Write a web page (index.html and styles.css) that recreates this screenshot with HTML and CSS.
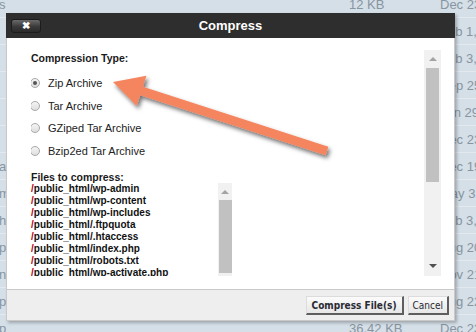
FILE: index.html
```html
<!DOCTYPE html>
<html>
<head>
<title>File Manager - Compress</title>
<link rel="stylesheet" href="styles.css">
</head>
<body>
  <div id="listing">
    <div class="row"><span class="name">s</span><span class="size">12 KB</span><span class="date">Dec 23, 2018</span></div>
    <div class="row"><span class="name"></span><span class="size">4 KB</span><span class="date">Feb 1, 2019</span></div>
    <div class="row"><span class="name"></span><span class="size">4 KB</span><span class="date">Feb 3, 2019</span></div>
    <div class="row"><span class="name"></span><span class="size">4 KB</span><span class="date">Sep 25, 2018</span></div>
    <div class="row"><span class="name"></span><span class="size">20 bytes</span><span class="date">Jan 29, 2019</span></div>
    <div class="row"><span class="name"></span><span class="size">1.2 KB</span><span class="date">Dec 23, 2018</span></div>
    <div class="row"><span class="name">a</span><span class="size">418 bytes</span><span class="date">Dec 19, 2018</span></div>
    <div class="row"><span class="name">m</span><span class="size">19.46 KB</span><span class="date">May 3, 2018</span></div>
    <div class="row"><span class="name">h</span><span class="size">7.26 KB</span><span class="date">Feb 3, 2019</span></div>
    <div class="row"><span class="name">p</span><span class="size">6.77 KB</span><span class="date">Aug 20, 2018</span></div>
    <div class="row"><span class="name">n</span><span class="size">369 bytes</span><span class="date">Nov 21, 2018</span></div>
    <div class="row"><span class="name">p</span><span class="size">2.27 KB</span><span class="date">Aug 22, 2018</span></div>
    <div class="row"><span class="name">p</span><span class="size">36.42 KB</span><span class="date">Dec 23, 2018</span></div>
  </div>

  <div id="dialog">
    <div class="dlg-head">
      <span class="close-btn">&#10006;</span>
      <span class="dlg-title">Compress</span>
    </div>
    <div class="dlg-body">
      <div class="scroll-content">
        <div class="section-label">Compression Type:</div>
        <div class="opt"><span class="radio checked"></span>Zip Archive</div>
        <div class="opt"><span class="radio"></span>Tar Archive</div>
        <div class="opt"><span class="radio"></span>GZiped Tar Archive</div>
        <div class="opt"><span class="radio"></span>Bzip2ed Tar Archive</div>
        <div class="files-label">Files to compress:</div>
        <div class="files-box">
          <div class="files-text">
            <div><span class="slash">/</span>public_html/wp-admin</div>
            <div><span class="slash">/</span>public_html/wp-content</div>
            <div><span class="slash">/</span>public_html/wp-includes</div>
            <div><span class="slash">/</span>public_html/.ftpquota</div>
            <div><span class="slash">/</span>public_html/.htaccess</div>
            <div><span class="slash">/</span>public_html/index.php</div>
            <div><span class="slash">/</span>public_html/robots.txt</div>
            <div><span class="slash">/</span>public_html/wp-activate.php</div>
            <div><span class="slash">/</span>public_html/wp-blog-header.php</div>
            <div><span class="slash">/</span>public_html/wp-config.php</div>
          </div>
          <div class="lscroll">
            <span class="arr-up"></span>
            <span class="lthumb"></span>
          </div>
        </div>
      </div>
      <div class="vscroll">
        <span class="arr-up"></span>
        <span class="thumb"></span>
        <span class="arr-down"></span>
      </div>
    </div>
    <div class="dlg-foot">
      <button class="btn btn-main">Compress File(s)</button>
      <button class="btn">Cancel</button>
    </div>
  </div>

  <svg id="arrow" width="476" height="332" viewBox="0 0 476 332">
    <defs>
      <filter id="shadow" x="-10%" y="-30%" width="130%" height="180%">
        <feDropShadow dx="2" dy="3" stdDeviation="2" flood-color="#000" flood-opacity="0.55"/>
      </filter>
    </defs>
    <polygon filter="url(#shadow)" fill="#f4855f"
      points="113,82 146.4,75.7 143,86.7 328.4,146.7 325.6,155.3 140.2,95.3 136.8,106"/>
  </svg>
</body>
</html>
```

FILE: styles.css
```css
body {
margin: 0;
width: 476px;
height: 332px;
overflow: hidden;
background-color: #d5dfe7;
font-family: "Liberation Sans", Arial, sans-serif;
}

#listing {
margin-top: -9px;
overflow: hidden;
}

.row {
display: grid;
grid-template-columns: 349px 91px 1fr;
height: 26px;
border-bottom: 1px solid #e3e9ee;
align-items: center;
font-size: 13px;
color: #8795a1;
white-space: nowrap;
overflow: hidden;
}

.row .name {
margin-left: -1px;
}

/* modal */
#dialog {
position: absolute;
left: 6px;
top: 13px;
width: 449px;
box-shadow: 2px 2px 3px rgba(0, 0, 0, 0.25);
}

.dlg-head {
display: grid;
grid-template-columns: 1fr auto 1fr;
align-items: center;
height: 25px;
background-color: #2e2e2e;
}

.close-btn {
justify-self: start;
margin-left: 5px;
width: 28px;
height: 12px;
line-height: 12px;
text-align: center;
font-size: 10px;
font-weight: bold;
color: #fff;
background: linear-gradient(#6a6a6a, #3a3a3a 55%, #2a2a2a);
border: 1px solid #1c1c1c;
border-radius: 3px;
}

.dlg-title {
grid-column: 2;
color: #fff;
font-weight: bold;
font-size: 13px;
}

.dlg-body {
display: flex;
height: 239px;
padding: 12px 13px 0 24px;
background-color: #fff;
border-left: 1px solid #c9c9c9;
border-right: 1px solid #c9c9c9;
}

.scroll-content {
flex: 1;
height: 226px;
overflow: hidden;
font-size: 11px;
color: #111;
}

.section-label {
height: 16px;
line-height: 16px;
margin-bottom: 6px;
font-size: 10.5px;
font-weight: bold;
color: #1a1a1a;
}

.opt {
display: flex;
align-items: center;
height: 22.5px;
color: #222;
}

.radio {
box-sizing: border-box;
width: 10px;
height: 10px;
margin-left: -1px;
margin-right: 8px;
border: 1px solid #a8a8a8;
border-radius: 50%;
background: linear-gradient(#f4f4f4, #dedede);
display: flex;
align-items: center;
justify-content: center;
}

.radio.checked::after {
content: "";
width: 4px;
height: 4px;
border-radius: 50%;
background-color: #555;
}

.files-label {
margin-top: 9px;
height: 12px;
line-height: 12px;
font-size: 10.5px;
font-weight: bold;
color: #1a1a1a;
}

.files-box {
display: flex;
width: 201px;
height: 130px;
}

.files-text {
flex: 1;
line-height: 12px;
font-size: 10px;
font-weight: bold;
color: #111;
white-space: nowrap;
overflow: hidden;
}

.slash {
color: #c00000;
}

/* fake scrollbars */
.vscroll, .lscroll {
position: relative;
background-color: #f1f1f1;
}

.vscroll {
width: 17px;
height: 226px;
}

.lscroll {
width: 14px;
}

.arr-up, .arr-down {
position: absolute;
left: 50%;
margin-left: -4px;
width: 0;
height: 0;
border-left: 4px solid transparent;
border-right: 4px solid transparent;
}

.arr-up {
top: 7px;
border-bottom: 4px solid #a3a3a3;
}

.arr-down {
bottom: 8px;
border-top: 4px solid #505050;
}

.thumb {
position: absolute;
left: 2px;
right: 2px;
top: 18px;
height: 114px;
background-color: #c1c1c1;
}

.lthumb {
position: absolute;
left: 1px;
right: 0;
top: 17px;
height: 73px;
background-color: #c1c1c1;
}

.dlg-foot {
display: flex;
justify-content: flex-end;
align-items: flex-start;
gap: 4px;
padding: 6px 5px 0 0;
box-sizing: border-box;
height: 32px;
background-color: #eeeeee;
border: 1px solid #c9c9c9;
}

.btn {
height: 19px;
padding: 0 3px;
font-family: "DejaVu Sans Condensed", "DejaVu Sans", sans-serif;
font-size: 10px;
color: #2a2a33;
background: linear-gradient(#fbfbfb, #e6e6e6);
border-style: solid;
border-width: 1px 2px 2px 1px;
border-color: #dcdcdc #5e5e5e #5e5e5e #dcdcdc;
}

.btn-main {
font-weight: bold;
padding: 0 5px;
}

.btn + .btn {
padding: 0 4px;
}

#arrow {
position: absolute;
left: 0;
top: 0;
}
```
